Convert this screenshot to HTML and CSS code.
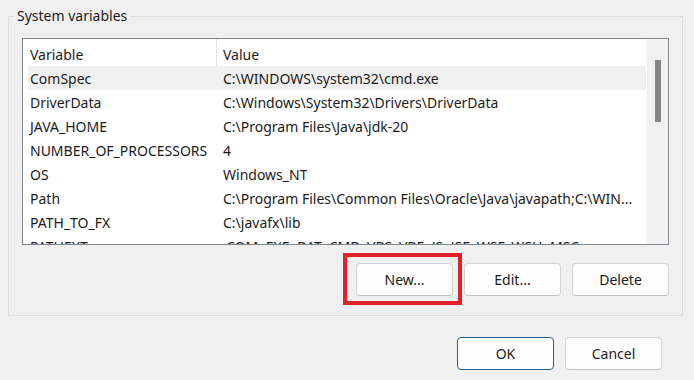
FILE: index.html
```html
<!DOCTYPE html>
<html lang="en">
<head>
  <meta charset="UTF-8">
  <title>Environment Variables</title>
  <link rel="stylesheet" href="styles.css">
</head>
<body>
  <div class="dialog">
    <fieldset class="group">
      <legend>System variables</legend>

      <div class="list">
        <div class="rows">
          <div class="row head">
            <div class="cell name">Variable</div>
            <div class="cell value">Value</div>
          </div>
          <div class="row selected">
            <div class="cell name">ComSpec</div>
            <div class="cell value">C:\WINDOWS\system32\cmd.exe</div>
          </div>
          <div class="row">
            <div class="cell name">DriverData</div>
            <div class="cell value">C:\Windows\System32\Drivers\DriverData</div>
          </div>
          <div class="row">
            <div class="cell name">JAVA_HOME</div>
            <div class="cell value">C:\Program Files\Java\jdk-20</div>
          </div>
          <div class="row">
            <div class="cell name">NUMBER_OF_PROCESSORS</div>
            <div class="cell value">4</div>
          </div>
          <div class="row">
            <div class="cell name">OS</div>
            <div class="cell value">Windows_NT</div>
          </div>
          <div class="row">
            <div class="cell name">Path</div>
            <div class="cell value">C:\Program Files\Common Files\Oracle\Java\javapath;C:\WIN...</div>
          </div>
          <div class="row">
            <div class="cell name">PATH_TO_FX</div>
            <div class="cell value">C:\javafx\lib</div>
          </div>
          <div class="row">
            <div class="cell name">PATHEXT</div>
            <div class="cell value">.COM;.EXE;.BAT;.CMD;.VBS;.VBE;.JS;.JSE;.WSF;.WSH;.MSC</div>
          </div>
        </div>
        <div class="scrollbar">
          <div class="thumb"></div>
        </div>
      </div>

      <div class="actions">
        <button class="btn marked">New...</button>
        <button class="btn">Edit...</button>
        <button class="btn">Delete</button>
      </div>
    </fieldset>

    <div class="footer">
      <button class="btn default">OK</button>
      <button class="btn">Cancel</button>
    </div>
  </div>
</body>
</html>
```

FILE: styles.css
```css
:root {
  --bg: #f0f0f0;
  --text: #1b1b1b;
  --line: #dcdcdc;
  --list-border: #828790;
}

body {
  margin: 0;
  background: var(--bg);
  color: var(--text);
  font-family: "Noto Sans", "Open Sans", sans-serif;
  font-size: 14px;
  overflow: hidden;
}

.dialog {
  padding: 6px 11px 0 8px;
}

.group {
  margin: 0;
  padding: 0 0 19px 0;
  border: 1px solid var(--line);
  min-width: 0;
}

.group legend {
  margin-left: 5px;
  padding: 0 3px;
  line-height: 20px;
}

.list {
  display: flex;
  margin: 12px 13px 0 13px;
  height: 205px;
  background: #fff;
  border: 1px solid var(--list-border);
  overflow: hidden;
}

.rows {
  flex: 1;
  padding-left: 5px;
  padding-right: 1px;
  min-width: 0;
}

.row {
  display: flex;
  height: 24px;
  align-items: center;
  white-space: nowrap;
}

.row.head {
  height: 27px;
  align-items: stretch;
}

.row.selected {
  background: #f0f0f0;
}

.cell {
  overflow: hidden;
}

.cell.name {
  width: 186px;
  flex: none;
  padding-left: 2px;
}

.cell.value {
  padding-left: 7px;
}

.row.head .cell {
  display: flex;
  align-items: center;
  padding-top: 3px;
}

.row.head .cell.name {
  border-right: 1px solid #e5e5e5;
}

.row.head .cell.value {
  padding-left: 6px;
}

.scrollbar {
  width: 21px;
  flex: none;
  background: #f0f0f0;
  padding-top: 21px;
  display: flex;
  justify-content: center;
}

.thumb {
  width: 6px;
  height: 62px;
  background: #858585;
  margin-left: 1px;
}

.actions {
  display: flex;
  justify-content: flex-end;
  gap: 11px;
  margin-top: 18px;
  padding-right: 13px;
}

.btn {
  width: 97px;
  height: 33px;
  background: #fdfdfd;
  border: 1px solid #d4d4d4;
  border-bottom-color: #c2c2c2;
  border-radius: 4px;
  font-family: inherit;
  font-size: 14px;
  color: var(--text);
  padding: 0;
}

.btn.marked {
  position: relative;
}

/* red annotation frame around the New button */
.btn.marked::after {
  content: '';
  position: absolute;
  top: -11px;
  left: -14px;
  right: -10px;
  bottom: -10px;
  border: 4px solid #e4202a;
}

.footer {
  display: flex;
  justify-content: flex-end;
  gap: 11px;
  margin-top: 21px;
  padding-right: 21px;
}

.btn.default {
  border-color: #2a5f93;
}
```
